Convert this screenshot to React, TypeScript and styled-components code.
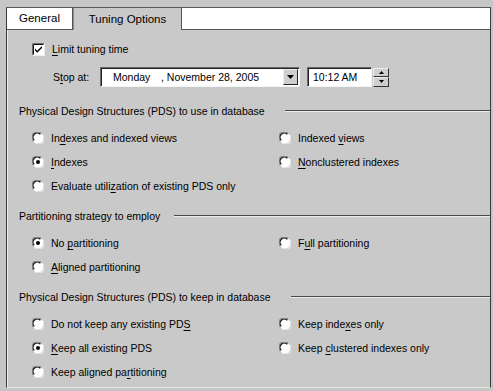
import React from "react";
import styled, { createGlobalStyle } from "styled-components";

const GlobalStyle = createGlobalStyle`
  html, body {
    margin: 0;
    padding: 0;
    background: #c6c6c6;
  }
  body {
    font-family: "Liberation Sans", Arial, sans-serif;
    font-size: 10.5px;
    color: #000;
  }
`;

const Frame = styled.div`
  width: 493px;
  height: 391px;
  padding: 7px 2px 3px 6px;
  box-sizing: border-box;
  background: #c6c6c6;
`;

const Window = styled.div`
  height: 100%;
  display: flex;
  flex-direction: column;
  border-left: 1px solid #3a3a3a;
  border-top: 1px solid #5a5a5a;
  border-right: 1px solid #3a3a3a;
  border-bottom: 1px solid #e6e6e6;
  box-sizing: border-box;
`;

const TabStrip = styled.div`
  display: flex;
  height: 22px;
  background: #fff;
  border-bottom: 1px solid #555;
  box-sizing: border-box;
`;

const Tab = styled.div<{ $active?: boolean; $w: number }>`
  width: ${(p) => p.$w}px;
  height: ${(p) => (p.$active ? 22 : 21)}px;
  box-sizing: border-box;
  display: flex;
  align-items: center;
  justify-content: center;
  padding-bottom: 1px;
  background: ${(p) => (p.$active ? "#c9c9c9" : "#fff")};
  border-right: 1px solid #555;
  border-left: ${(p) => (p.$active ? "1px solid #8a8a8a" : "none")};
  font-size: 11.5px;
  z-index: 1;
`;

const Panel = styled.div`
  flex: 1;
  background: #c9c9c9;
  padding: 12px 0 0 11px;
  border-left: 1px solid #eee;
`;

const CheckRow = styled.label`
  display: flex;
  align-items: center;
  height: 14px;
  margin-left: 13px;
  gap: 7px;
`;

const StopRow = styled.div`
  display: flex;
  align-items: center;
  height: 20px;
  margin-top: 11px;
  margin-left: 34px;
`;

const StopLabel = styled.span`
  width: 47px;
`;

const Sunken = styled.div<{ $w: number; $pad: number; $gap: number }>`
  width: ${(p) => p.$w}px;
  height: 20px;
  box-sizing: border-box;
  background: #fff;
  border-top: 1px solid #6a6a6a;
  border-left: 1px solid #6a6a6a;
  border-right: 1px solid #f4f4f4;
  border-bottom: 1px solid #f4f4f4;
  box-shadow: inset 1px 1px 0 #222;
  display: flex;
  align-items: center;
  padding-left: ${(p) => p.$pad}px;
  margin-right: ${(p) => p.$gap}px;
`;

const DateText = styled.span<{ $w?: number }>`
  width: ${(p) => (p.$w ? `${p.$w}px` : "auto")};
  flex-shrink: 0;
`;

const Spacer = styled.div`
  flex: 1;
`;

const DropButton = styled.div`
  width: 15px;
  height: 16px;
  margin-right: 1px;
  box-sizing: border-box;
  background: #cfcfcf;
  border-top: 1px solid #eee;
  border-left: 1px solid #eee;
  border-right: 1px solid #222;
  border-bottom: 1px solid #222;
  display: flex;
  align-items: center;
  justify-content: center;
`;

const Spinner = styled.div`
  display: flex;
  flex-direction: column;
  width: 16px;
  height: 19px;
  margin-left: 1px;
`;

const SpinHalf = styled.div`
  flex: 1;
  box-sizing: border-box;
  background: #cfcfcf;
  border-top: 1px solid #eee;
  border-left: 1px solid #eee;
  border-right: 1px solid #333;
  border-bottom: 1px solid #333;
  display: flex;
  align-items: center;
  justify-content: center;
`;

const Section = styled.section<{ $first?: boolean }>`
  margin-top: ${(p) => (p.$first ? 17 : 11)}px;
`;

const Header = styled.div<{ $gap: number }>`
  display: flex;
  align-items: center;
  height: 14px;
  gap: ${(p) => p.$gap}px;
`;

const Rule = styled.div`
  flex: 1;
  height: 0;
  border-top: 1px solid #4a4a4a;
  border-bottom: 1px solid #ececec;
`;

const Grid = styled.div`
  display: grid;
  grid-template-columns: 247px 1fr;
  grid-auto-rows: 24px;
  margin-top: 8px;
  margin-left: 13px;
`;

const Option = styled.label`
  display: flex;
  align-items: center;
  gap: 7px;
`;

const Key = styled.u`
  text-underline-offset: 2px;
`;

const Radio = ({ checked }: { checked?: boolean }) => (
  <svg width="12" height="12" viewBox="0 0 12 12">
    <circle cx="6" cy="6" r="5.5" fill="#fff" />
    <path d="M1.2 9.2 A5.2 5.2 0 0 1 9.2 1.2" stroke="#7a7a7a" fill="none" strokeWidth="1" />
    <path d="M2.3 8.4 A4 4 0 0 1 8.4 2.3" stroke="#111" fill="none" strokeWidth="1.3" />
    <path d="M10.8 2.8 A5.2 5.2 0 0 1 2.8 10.8" stroke="#f4f4f4" fill="none" strokeWidth="1" />
    {checked && <circle cx="6" cy="6" r="2" fill="#000" />}
  </svg>
);

const Check = () => (
  <svg width="13" height="13" viewBox="0 0 13 13">
    <rect x="0" y="0" width="13" height="13" fill="#fff" />
    <path d="M0.5 12.5 V0.5 H12.5" stroke="#6a6a6a" fill="none" />
    <path d="M1.5 11.5 V1.5 H11.5" stroke="#111" fill="none" />
    <path d="M0.5 12.5 H12.5 V0.5" stroke="#eee" fill="none" />
    <path d="M3 5.5 L5.2 7.8 L10 3 V5 L5.2 9.8 L3 7.5 Z" fill="#000" />
  </svg>
);

const DownArrow = () => (
  <svg width="7" height="4" viewBox="0 0 7 4">
    <path d="M0 0 H7 L3.5 4 Z" fill="#000" />
  </svg>
);

const SmallArrow = ({ up }: { up?: boolean }) => (
  <svg width="5" height="3" viewBox="0 0 5 3">
    <path d={up ? "M0 3 H5 L2.5 0 Z" : "M0 0 H5 L2.5 3 Z"} fill="#000" />
  </svg>
);

type Opt = { label: React.ReactNode; checked?: boolean };

const OptionGrid = ({ items }: { items: Opt[] }) => (
  <Grid>
    {items.map((o, i) => (
      <Option key={i}>
        <Radio checked={o.checked} />
        <span>{o.label}</span>
      </Option>
    ))}
  </Grid>
);

export default function App() {
  return (
    <Frame>
      <GlobalStyle />
      <Window>
        <TabStrip>
          <Tab $w={66}>General</Tab>
          <Tab $w={109} $active>
            Tuning Options
          </Tab>
        </TabStrip>
        <Panel>
          <CheckRow>
            <Check />
            <span>
              <Key>L</Key>imit tuning time
            </span>
          </CheckRow>
          <StopRow>
            <StopLabel>
              S<Key>t</Key>op at:
            </StopLabel>
            <Sunken $w={200} $pad={12} $gap={7}>
              <DateText $w={48}>Monday</DateText>
              <DateText>, November 28, 2005</DateText>
              <Spacer />
              <DropButton>
                <DownArrow />
              </DropButton>
            </Sunken>
            <Sunken $w={65} $pad={5} $gap={0}>
              <DateText>10:12 AM</DateText>
            </Sunken>
            <Spinner>
              <SpinHalf>
                <SmallArrow up />
              </SpinHalf>
              <SpinHalf>
                <SmallArrow />
              </SpinHalf>
            </Spinner>
          </StopRow>

          <Section $first>
            <Header $gap={20}>
              <span>Physical Design Structures (PDS) to use in database</span>
              <Rule />
            </Header>
            <OptionGrid
              items={[
                { label: <>In<Key>d</Key>exes and indexed views</> },
                { label: <>Indexed <Key>v</Key>iews</> },
                { label: <><Key>I</Key>ndexes</>, checked: true },
                { label: <><Key>N</Key>onclustered indexes</> },
                { label: <>Evaluate utili<Key>z</Key>ation of existing PDS only</> },
              ]}
            />
          </Section>

          <Section>
            <Header $gap={14}>
              <span>Partitioning strategy to employ</span>
              <Rule />
            </Header>
            <OptionGrid
              items={[
                { label: <>No <Key>p</Key>artitioning</>, checked: true },
                { label: <>F<Key>u</Key>ll partitioning</> },
                { label: <><Key>A</Key>ligned partitioning</> },
              ]}
            />
          </Section>

          <Section>
            <Header $gap={20}>
              <span>Physical Design Structures (PDS) to keep in database</span>
              <Rule />
            </Header>
            <OptionGrid
              items={[
                { label: <>Do not keep any existing PD<Key>S</Key></> },
                { label: <>Keep inde<Key>x</Key>es only</> },
                { label: <><Key>K</Key>eep all existing PDS</>, checked: true },
                { label: <>Keep <Key>c</Key>lustered indexes only</> },
                { label: <>Keep aligned pa<Key>r</Key>titioning</> },
              ]}
            />
          </Section>
        </Panel>
      </Window>
    </Frame>
  );
}
